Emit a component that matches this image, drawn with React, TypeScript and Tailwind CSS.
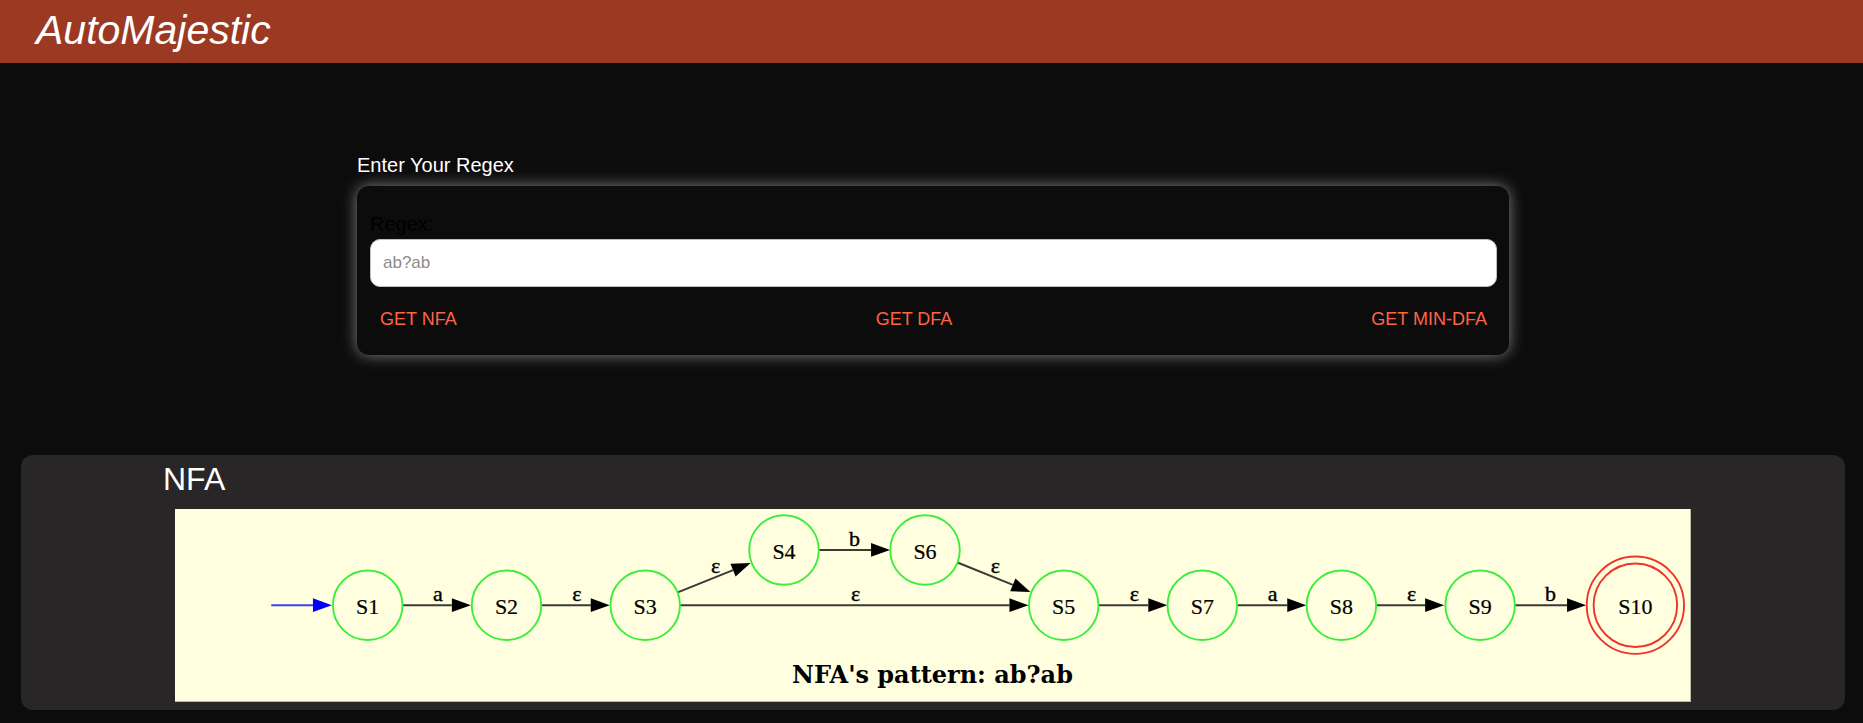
import React from 'react';

type State = { id: string; x: number; y: number; final?: boolean };
type Edge = { label: string; x1: number; y1: number; x2: number; y2: number; lx: number; ly: number };

const states: State[] = [
  { id: 'S1', x: 192.8, y: 96.3 },
  { id: 'S2', x: 331.7, y: 96.3 },
  { id: 'S3', x: 470.5, y: 96.3 },
  { id: 'S4', x: 609.4, y: 41 },
  { id: 'S6', x: 750.5, y: 41 },
  { id: 'S5', x: 889.3, y: 96.3 },
  { id: 'S7', x: 1028, y: 96.3 },
  { id: 'S8', x: 1167.2, y: 96.3 },
  { id: 'S9', x: 1306, y: 96.3 },
  { id: 'S10', x: 1461.4, y: 96.3, final: true },
];

const edges: Edge[] = [
  { label: 'a', x1: 228, y1: 96.3, x2: 296, y2: 96.3, lx: 263, ly: 92.5 },
  { label: 'ε', x1: 367, y1: 96.3, x2: 435, y2: 96.3, lx: 402, ly: 92.5 },
  { label: 'ε', x1: 503, y1: 83.5, x2: 576, y2: 54, lx: 541, ly: 64 },
  { label: 'ε', x1: 505, y1: 96.3, x2: 854, y2: 96.3, lx: 681, ly: 92.5 },
  { label: 'b', x1: 644, y1: 41, x2: 715.5, y2: 41, lx: 680, ly: 37 },
  { label: 'ε', x1: 783, y1: 53.5, x2: 856, y2: 83, lx: 821, ly: 64 },
  { label: 'ε', x1: 924, y1: 96.3, x2: 993, y2: 96.3, lx: 960, ly: 92.5 },
  { label: 'a', x1: 1063, y1: 96.3, x2: 1132, y2: 96.3, lx: 1098.5, ly: 92.5 },
  { label: 'ε', x1: 1202, y1: 96.3, x2: 1270, y2: 96.3, lx: 1237.5, ly: 92.5 },
  { label: 'b', x1: 1341, y1: 96.3, x2: 1412, y2: 96.3, lx: 1376.5, ly: 92.5 },
];

function Arrow({ x1, y1, x2, y2, color, head }: { x1: number; y1: number; x2: number; y2: number; color: string; head: string }) {
  const length = Math.hypot(x2 - x1, y2 - y1);
  const angle = (Math.atan2(y2 - y1, x2 - x1) * 180) / Math.PI;
  return (
    <g transform={`translate(${x1} ${y1}) rotate(${angle})`}>
      <line x1={0} y1={0} x2={length - 19} y2={0} stroke={color} strokeWidth={2} />
      <path d={`M${length - 19} -6.9 L${length} 0 L${length - 19} 6.9 Z`} fill={head} />
    </g>
  );
}

function NfaDiagram() {
  return (
    <svg viewBox="0 0 1516 192" role="img" aria-label="NFA diagram" className="block w-full border-r border-b border-[#b9b9a0] bg-[#ffffe0] font-['Liberation_Serif',serif]">
      <Arrow x1={96.3} y1={96.3} x2={157} y2={96.3} color="#4040ee" head="#0000ff" />
      {edges.map((edge, i) => (
        <g key={i}>
          <Arrow x1={edge.x1} y1={edge.y1} x2={edge.x2} y2={edge.y2} color="#3a3a34" head="#000000" />
          <text x={edge.lx} y={edge.ly} textAnchor="middle" fontSize={22} stroke="#000000" strokeWidth={0.4}>{edge.label}</text>
        </g>
      ))}
      {states.map((s) => (
        <g key={s.id}>
          {s.final ? (
            <>
              <circle cx={s.x} cy={s.y} r={41.8} fill="none" stroke="#ee3528" strokeWidth={1.9} />
              <circle cx={s.x} cy={s.y} r={48.7} fill="none" stroke="#ee3528" strokeWidth={1.9} />
            </>
          ) : (
            <circle cx={s.x} cy={s.y} r={34.8} fill="none" stroke="#3bee3b" strokeWidth={1.9} />
          )}
          <text x={s.x} y={s.y + 9} textAnchor="middle" fontSize={22} stroke="#000000" strokeWidth={0.2}>{s.id}</text>
        </g>
      ))}
      <text x={758} y={174} textAnchor="middle" fontSize={24} fontWeight={700} className="font-['DejaVu_Serif',serif]">NFA's pattern: ab?ab</text>
    </svg>
  );
}

const actions = ['GET NFA', 'GET DFA', 'GET MIN-DFA'];

export default function App() {
  return (
    <div className="min-h-screen bg-[#0c0c0c] font-['Liberation_Sans',Arial,sans-serif] text-white">
      <header className="bg-[#9b3922] px-9 pt-[6px] pb-[9px]">
        <h1 className="text-[41px] leading-[48px] italic">AutoMajestic</h1>
      </header>

      <main className="pt-[90px] pr-[18px] pb-3 pl-[21px]">
        <section className="mx-auto max-w-[1152px]">
          <h2 className="text-xl leading-6">Enter Your Regex</h2>
          <form className="mt-[9px] rounded-xl pt-[25px] pr-3 pb-5 pl-[13px] shadow-[0_0_15px_#808080]" onSubmit={(e) => e.preventDefault()}>
            <label htmlFor="regex" className="block pb-[2px] text-xl leading-[26px] text-black">Regex:</label>
            <input
              id="regex"
              type="text"
              placeholder="ab?ab"
              className="block h-12 w-full rounded-[10px] border border-[#c0c0c0] bg-white px-3 text-[17px] text-black outline-none placeholder:text-[#8c8c8c]"
            />
            <div className="mt-3 flex justify-between">
              {actions.map((name) => (
                <button key={name} type="button" className="h-9 px-[10px] pt-1 text-lg text-[#ff6347]">{name}</button>
              ))}
            </div>
          </form>
        </section>

        <section className="mt-[100px] rounded-xl bg-[#282627] px-[142px] pt-1 pb-2">
          <h2 className="text-[32px] leading-10">NFA</h2>
          <div className="px-3 pt-[10px]">
            <NfaDiagram />
          </div>
        </section>
      </main>
    </div>
  );
}
